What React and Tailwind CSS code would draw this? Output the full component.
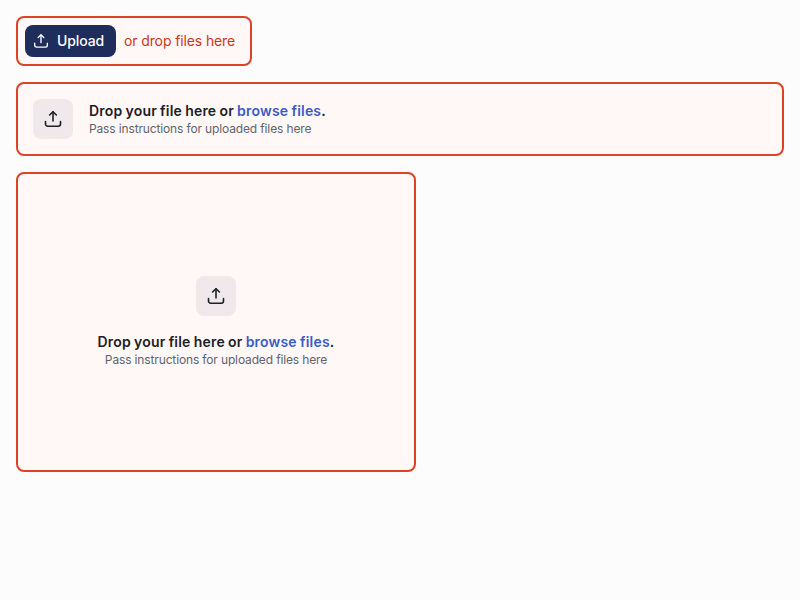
function UploadIcon({ className, viewBox = "0 0 20 20" }) {
  return (
    <svg className={className} viewBox={viewBox} fill="none" stroke="currentColor" strokeWidth="1.6" strokeLinecap="round" strokeLinejoin="round">
      <path d="M10 12V3" />
      <path d="M6.6 6 10 2.7l3.4 3.3" />
      <path d="M2.5 12.6v2.4a2.2 2.2 0 0 0 2.2 2.2h10.6a2.2 2.2 0 0 0 2.2-2.2v-2.4" />
    </svg>
  );
}

function IconTile() {
  return (
    <div className="flex size-10 shrink-0 items-center justify-center rounded-lg bg-[#f0e9ec] text-[#1c2024]">
      <UploadIcon className="size-5" />
    </div>
  );
}

function DropText({ className = "" }) {
  return (
    <div className={className}>
      <p className="text-[14px] leading-5 font-semibold tracking-[0.2px] text-[#1c2024] [word-spacing:-0.6px]">
        Drop your file here or <a className="text-[#3a5bc7]">browse files</a>.
      </p>
      <p className="text-[12px] leading-4 tracking-[-0.14px] text-[#60646c]">Pass instructions for uploaded files here</p>
    </div>
  );
}

export default function App() {
  return (
    <main className="flex min-h-screen flex-col items-start gap-4 bg-[#fcfcfc] p-4 font-['Inter',sans-serif]">
      <div className="flex h-[50px] w-[236px] items-center gap-2 rounded-lg border-2 border-[#dd4425] bg-[#fff8f7] pl-[7px]">
        <button className="flex h-8 w-[91px] items-center gap-2 rounded-lg bg-[#1f2d5c] pl-2 text-[14px] leading-5 font-medium tracking-[-0.12px] text-white">
          <UploadIcon className="size-4" viewBox="0.5 0.5 19 19" />
          Upload
        </button>
        <span className="text-[14px] leading-5 tracking-[-0.12px] whitespace-nowrap text-[#d13415]">or drop files here</span>
      </div>
      <div className="flex h-[74px] w-full items-center gap-4 rounded-lg border-2 border-[#dd4425] bg-[#fff8f7] pl-[15px]">
        <IconTile />
        <DropText />
      </div>
      <div className="flex h-[300px] w-[400px] flex-col items-center justify-center gap-4 rounded-lg border-2 border-[#dd4425] bg-[#fff8f7]">
        <IconTile />
        <DropText className="text-center" />
      </div>
    </main>
  );
}
